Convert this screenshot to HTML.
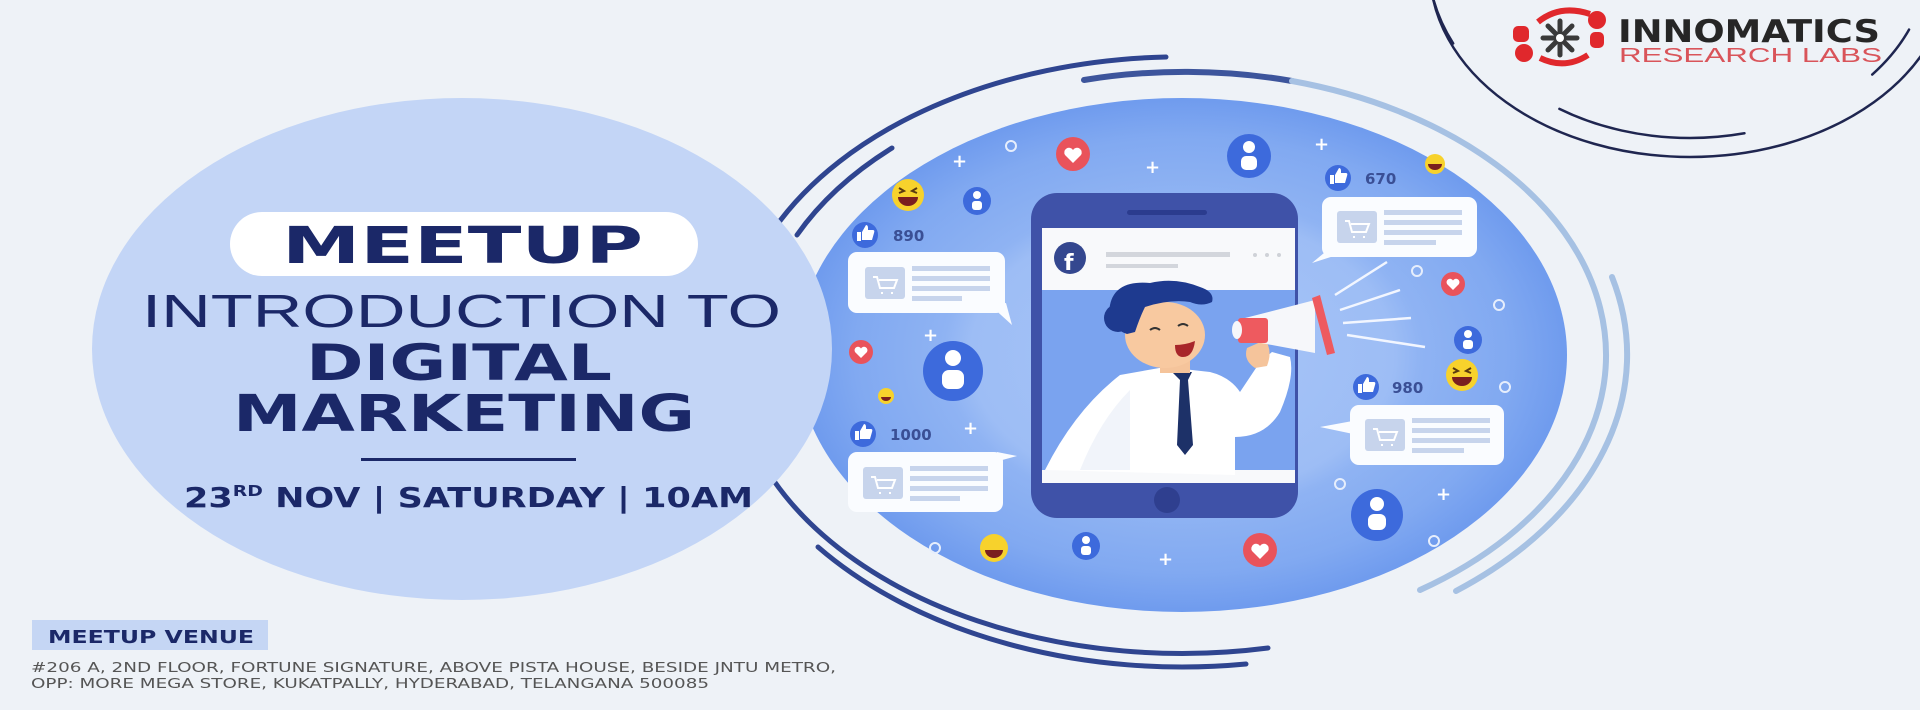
<!DOCTYPE html>
<html><head><meta charset="utf-8"><style>
html,body{margin:0;padding:0;background:#eef2f7;}
svg{display:block}
</style></head><body>
<svg width="1920" height="710" viewBox="0 0 1920 710" xmlns="http://www.w3.org/2000/svg">
<defs>
<radialGradient id="bg" cx="0.5" cy="0.5" r="0.5">
<stop offset="0" stop-color="#a9c6f7"/>
<stop offset="0.55" stop-color="#9dbdf5"/>
<stop offset="0.62" stop-color="#8fb3f3"/>
<stop offset="0.85" stop-color="#81a9f1"/>
<stop offset="1" stop-color="#6f9bee"/>
</radialGradient>
</defs>
<rect width="1920" height="710" fill="#eef2f7"/>

<!-- rings around the big circle -->
<g fill="none" stroke-linecap="round">
<path d="M774 229 A450 298 0 0 1 1166 57" stroke="#2f4590" stroke-width="5"/>
<path d="M797 235 A425 283 0 0 1 892 148" stroke="#2f4590" stroke-width="5"/>
<path d="M1084 80 A425 284 0 0 1 1292 81" stroke="#3d559c" stroke-width="6"/>
<path d="M1292 81 A425 284 0 0 1 1420 590" stroke="#a6c1e3" stroke-width="6"/>
<path d="M1612 277 A445 300 0 0 1 1456 591" stroke="#a6c1e3" stroke-width="6"/>
<path d="M1268 648 A450 298 0 0 1 774 481" stroke="#2f4590" stroke-width="5"/>
<path d="M1246 664 A462 312 0 0 1 818 547" stroke="#2f4590" stroke-width="5"/>
</g>

<!-- big blue circle -->
<ellipse cx="1182" cy="355" rx="385" ry="257" fill="url(#bg)"/>

<!-- left pale ellipse -->
<ellipse cx="462" cy="349" rx="370" ry="251" fill="#c3d5f6"/>

<!-- decorative small items -->
<g fill="none" stroke="#e6eefc" stroke-width="2">
<circle cx="1011" cy="146" r="5"/><circle cx="1417" cy="271" r="5"/><circle cx="1499" cy="305" r="5"/><circle cx="1505" cy="387" r="5"/><circle cx="935" cy="548" r="5"/><circle cx="1340" cy="484" r="5"/><circle cx="1434" cy="541" r="5"/>
</g>
<g fill="#ffffff" font-family="DejaVu Sans, sans-serif" font-size="18" font-weight="bold">
<text x="952" y="167">+</text><text x="1145" y="173">+</text><text x="1314" y="150">+</text><text x="923" y="341">+</text><text x="963" y="434">+</text><text x="1436" y="500">+</text><text x="1158" y="565">+</text>
</g>

<!-- hearts -->
<g>
<circle cx="1073" cy="154" r="17" fill="#e9535b"/><path d="M1073 163 l-8 -8 a4.5 4.5 0 0 1 8 -5 a4.5 4.5 0 0 1 8 5z" fill="#fff"/>
<circle cx="861" cy="352" r="12" fill="#e9535b"/><path d="M861 358 l-6 -6 a3.2 3.2 0 0 1 6 -3.5 a3.2 3.2 0 0 1 6 3.5z" fill="#fff"/>
<circle cx="1453" cy="284" r="12" fill="#e9535b"/><path d="M1453 290 l-6 -6 a3.2 3.2 0 0 1 6 -3.5 a3.2 3.2 0 0 1 6 3.5z" fill="#fff"/>
<circle cx="1260" cy="550" r="17" fill="#e9535b"/><path d="M1260 559 l-8 -8 a4.5 4.5 0 0 1 8 -5 a4.5 4.5 0 0 1 8 5z" fill="#fff"/>
</g>

<!-- users -->
<g>
<circle cx="1249" cy="156" r="22" fill="#3d6adc"/><circle cx="1249" cy="147" r="6" fill="#fff"/><rect x="1241" y="156" width="16" height="14" rx="5" fill="#fff"/>
<circle cx="977" cy="201" r="14" fill="#3d6adc"/><circle cx="977" cy="195" r="4" fill="#fff"/><rect x="972" y="201" width="10" height="9" rx="3" fill="#fff"/>
<circle cx="953" cy="371" r="30" fill="#3d6adc"/><circle cx="953" cy="358" r="8" fill="#fff"/><rect x="942" y="370" width="22" height="19" rx="7" fill="#fff"/>
<circle cx="1468" cy="340" r="14" fill="#3d6adc"/><circle cx="1468" cy="334" r="4" fill="#fff"/><rect x="1463" y="340" width="10" height="9" rx="3" fill="#fff"/>
<circle cx="1377" cy="515" r="26" fill="#3d6adc"/><circle cx="1377" cy="504" r="7" fill="#fff"/><rect x="1368" y="514" width="18" height="16" rx="6" fill="#fff"/>
<circle cx="1086" cy="546" r="14" fill="#3d6adc"/><circle cx="1086" cy="540" r="4" fill="#fff"/><rect x="1081" y="546" width="10" height="9" rx="3" fill="#fff"/>
</g>

<!-- emojis -->
<g>
<circle cx="908" cy="195" r="16" fill="#f7d22c"/><path d="M898 197 h20 a10 9 0 0 1 -20 0z" fill="#7a1f1f"/><path d="M899 188 l5 3 l-5 2 M917 188 l-5 3 l5 2" stroke="#5a3b10" stroke-width="2" fill="none"/>
<circle cx="886" cy="396" r="8" fill="#f7d22c"/><path d="M881 397 h10 a5 4 0 0 1 -10 0z" fill="#7a1f1f"/>
<circle cx="1462" cy="375" r="16" fill="#f7d22c"/><path d="M1452 377 h20 a10 9 0 0 1 -20 0z" fill="#7a1f1f"/><path d="M1453 368 l5 3 l-5 2 M1471 368 l-5 3 l5 2" stroke="#5a3b10" stroke-width="2" fill="none"/>
<circle cx="994" cy="548" r="14" fill="#f7d22c"/><path d="M985 550 h18 a9 8 0 0 1 -18 0z" fill="#7a1f1f"/>
<circle cx="1435" cy="164" r="10" fill="#f7d22c"/><path d="M1428 164 h14 a7 6 0 0 1 -14 0z" fill="#7a1f1f"/>
</g>

<!-- likes -->
<g font-family="DejaVu Sans, sans-serif" font-weight="bold" font-size="15" fill="#3a4f95">
<g fill="#3d6adc"><circle cx="865" cy="235" r="13"/><circle cx="1338" cy="178" r="13"/><circle cx="1366" cy="387" r="13"/><circle cx="863" cy="434" r="13"/></g>
<g fill="#fff">
<path d="M857 232 h4 v9 h-4z M862 232 l4 -7 q2 0 2 3 v2 h5 q2 0 1 3 l-2 7 h-10z"/>
<path d="M1330 175 h4 v9 h-4z M1335 175 l4 -7 q2 0 2 3 v2 h5 q2 0 1 3 l-2 7 h-10z"/>
<path d="M1358 384 h4 v9 h-4z M1363 384 l4 -7 q2 0 2 3 v2 h5 q2 0 1 3 l-2 7 h-10z"/>
<path d="M855 431 h4 v9 h-4z M860 431 l4 -7 q2 0 2 3 v2 h5 q2 0 1 3 l-2 7 h-10z"/>
</g>
<text x="893" y="241">890</text><text x="1365" y="184">670</text><text x="1392" y="393">980</text><text x="890" y="440">1000</text>
</g>

<!-- bubbles -->
<g>
<g fill="#fafcff">
<rect x="848" y="252" width="157" height="61" rx="9"/><path d="M990 305 l22 20 l-6 -22z"/>
<rect x="848" y="452" width="155" height="60" rx="9"/><path d="M995 462 l22 -6 l-20 -4z"/>
<rect x="1322" y="197" width="155" height="60" rx="9"/><path d="M1330 248 l-18 15 l25 -8z"/>
<rect x="1350" y="405" width="154" height="60" rx="9"/><path d="M1358 420 l-38 7 l38 8z"/>
</g>
<g fill="#c7d4ec">
<rect x="865" y="267" width="40" height="32" rx="3"/><rect x="912" y="266" width="78" height="5"/><rect x="912" y="276" width="78" height="5"/><rect x="912" y="286" width="78" height="5"/><rect x="912" y="296" width="50" height="5"/>
<rect x="863" y="467" width="40" height="32" rx="3"/><rect x="910" y="466" width="78" height="5"/><rect x="910" y="476" width="78" height="5"/><rect x="910" y="486" width="78" height="5"/><rect x="910" y="496" width="50" height="5"/>
<rect x="1337" y="211" width="40" height="32" rx="3"/><rect x="1384" y="210" width="78" height="5"/><rect x="1384" y="220" width="78" height="5"/><rect x="1384" y="230" width="78" height="5"/><rect x="1384" y="240" width="52" height="5"/>
<rect x="1365" y="419" width="40" height="32" rx="3"/><rect x="1412" y="418" width="78" height="5"/><rect x="1412" y="428" width="78" height="5"/><rect x="1412" y="438" width="78" height="5"/><rect x="1412" y="448" width="52" height="5"/>
</g>
<g fill="none" stroke="#fff" stroke-width="2">
<path d="M873 277 h4 l3 11 h14 l3 -8 h-18 M882 292 v2 M892 292 v2"/>
<path d="M871 477 h4 l3 11 h14 l3 -8 h-18 M880 492 v2 M890 492 v2"/>
<path d="M1345 221 h4 l3 11 h14 l3 -8 h-18 M1354 236 v2 M1364 236 v2"/>
<path d="M1373 429 h4 l3 11 h14 l3 -8 h-18 M1382 444 v2 M1392 444 v2"/>
</g>
</g>

<!-- megaphone sound lines -->
<g stroke="#f2f6ff" stroke-width="2.5">
<path d="M1335 295 l52 -33 M1340 310 l60 -20 M1343 323 l68 -5 M1347 335 l78 12"/>
</g>

<!-- phone -->
<rect x="1031" y="193" width="267" height="325" rx="26" fill="#3f52a8"/>
<rect x="1127" y="210" width="80" height="5" rx="2.5" fill="#2b3c8e"/>
<rect x="1042" y="228" width="253" height="255" fill="#7aa3ef"/>
<rect x="1042" y="228" width="253" height="62" fill="#f8f9fb"/>
<rect x="1042" y="470" width="253" height="13" fill="#f8f9fb"/>
<circle cx="1167" cy="500" r="13" fill="#2f3f8f"/>
<circle cx="1070" cy="258" r="16" fill="#34478f"/>
<text x="1064" y="270" font-family="DejaVu Sans, sans-serif" font-weight="bold" font-size="22" fill="#fff">f</text>
<rect x="1106" y="252" width="124" height="5" fill="#d3d6dc"/><rect x="1106" y="264" width="72" height="4" fill="#d3d6dc"/>
<g fill="#cfd2d8"><circle cx="1255" cy="255" r="2"/><circle cx="1267" cy="255" r="2"/><circle cx="1279" cy="255" r="2"/></g>

<!-- man -->
<g>
<path d="M1045 470 q30 -60 75 -95 l45 -8 l45 5 q20 5 30 20 l20 -30 l12 -10 l18 5 q5 20 -10 55 q-15 25 -45 25 v38 z" fill="#ffffff"/>
<path d="M1080 470 q20 -50 50 -80 l0 80z" fill="#e8edf6" opacity="0.6"/>
<path d="M1172 372 l20 0 l-4 8 l5 65 l-8 10 l-8 -10 l3 -65z" fill="#1d3168"/>
<rect x="1160" y="355" width="30" height="18" fill="#f5c49b"/>
<ellipse cx="1165" cy="335" rx="40" ry="33" fill="#f8c9a0"/>
<path d="M1175 345 q10 0 20 -4 q-2 16 -12 16 q-8 0 -8 -12z" fill="#a8262a"/>
<path d="M1110 305 q5 -25 40 -22 q25 -6 50 4 q15 5 12 15 q-10 5 -22 0 q-20 -3 -45 5 q-5 10 -10 25 l-8 2 q-22 -8 -17 -29z" fill="#1e3a8f"/>
<circle cx="1118" cy="318" r="14" fill="#1e3a8f"/>
<path d="M1150 330 q5 -4 10 0 M1178 326 q5 -4 10 0" stroke="#333" stroke-width="2" fill="none"/>
<path d="M1255 368 q-12 -8 -8 -20 l18 -8 q8 10 2 26z" fill="#f5c49b"/>
<path d="M1245 318 l70 -18 l0 53 l-70 -13z" fill="#f6f7fa"/>
<rect x="1238" y="318" width="30" height="25" rx="3" fill="#ee5a5f"/>
<path d="M1312 298 l8 -3 l15 58 l-8 2z" fill="#ee5a5f"/>
<ellipse cx="1237" cy="330" rx="5" ry="9" fill="#f6f7fa"/>
</g>

<!-- left text -->
<rect x="230" y="212" width="468" height="64" rx="32" fill="#ffffff"/>
<g fill="#1b2868" font-family="'DejaVu Sans', 'Liberation Sans', sans-serif">
<text x="282" y="263" font-size="51" font-weight="bold" textLength="361" lengthAdjust="spacingAndGlyphs">MEETUP</text>
<text x="142" y="327" font-size="46" font-family="'Liberation Sans', sans-serif" textLength="639" lengthAdjust="spacingAndGlyphs">INTRODUCTION TO</text>
<text x="306" y="380" font-size="50" font-weight="bold" textLength="306" lengthAdjust="spacingAndGlyphs">DIGITAL</text>
<text x="233" y="431" font-size="51" font-weight="bold" textLength="462" lengthAdjust="spacingAndGlyphs">MARKETING</text>
<rect x="361" y="458" width="215" height="3"/>
<text x="184" y="507" font-size="28" font-weight="bold" textLength="569" lengthAdjust="spacingAndGlyphs">23<tspan font-size="15" dy="-11">RD</tspan><tspan dy="11"> NOV | SATURDAY | 10AM</tspan></text>
</g>

<rect x="32" y="620" width="236" height="30" fill="#c5d6f4"/>
<g font-family="'DejaVu Sans', sans-serif">
<text x="48" y="643" font-size="18" font-weight="bold" fill="#1b2868" textLength="206" lengthAdjust="spacingAndGlyphs">MEETUP VENUE</text>
<text x="31" y="672" font-size="13.5" fill="#555" textLength="805" lengthAdjust="spacingAndGlyphs">#206 A, 2ND FLOOR, FORTUNE SIGNATURE, ABOVE PISTA HOUSE, BESIDE JNTU METRO,</text>
<text x="31" y="688" font-size="13.5" fill="#555" textLength="678" lengthAdjust="spacingAndGlyphs">OPP: MORE MEGA STORE, KUKATPALLY, HYDERABAD, TELANGANA 500085</text>
</g>

<!-- logo ring -->
<g fill="none" stroke="#1f2650" stroke-width="2.5" stroke-linecap="round">
<ellipse cx="1690" cy="-30" rx="260" ry="187" pathLength="360" stroke-dasharray="180 400" stroke-dashoffset="-0"/>
<ellipse cx="1690" cy="-40" rx="238" ry="178" pathLength="360" stroke-dasharray="52 400" stroke-dashoffset="-75"/>
<ellipse cx="1690" cy="-40" rx="238" ry="178" pathLength="360" stroke-dasharray="16 400" stroke-dashoffset="-20"/>
<ellipse cx="1690" cy="-40" rx="262" ry="195" pathLength="360" stroke-dasharray="12 400" stroke-dashoffset="-158"/>
</g>

<!-- logo icon -->
<g>
<path d="M1538 22 q22 -18 52 -8" stroke="#e0282c" stroke-width="6" fill="none"/>
<path d="M1540 58 q25 12 48 -3" stroke="#e0282c" stroke-width="6" fill="none"/>
<circle cx="1597" cy="20" r="9" fill="#e0282c"/>
<circle cx="1524" cy="53" r="9" fill="#e0282c"/>
<rect x="1513" y="26" width="16" height="16" rx="5" fill="#e0282c"/>
<rect x="1590" y="32" width="14" height="16" rx="5" fill="#e0282c"/>
<g stroke="#3a3a3a" stroke-width="5" stroke-linecap="round">
<path d="M1560 38 l0 -17 M1560 38 l12 -12 M1560 38 l17 0 M1560 38 l12 12 M1560 38 l0 17 M1560 38 l-12 12 M1560 38 l-17 0 M1560 38 l-12 -12"/>
</g>
<circle cx="1560" cy="38" r="4" fill="#fff"/>
</g>
<text x="1618" y="42" font-family="'DejaVu Sans', sans-serif" font-weight="bold" font-size="31" fill="#262626" textLength="262" lengthAdjust="spacingAndGlyphs">INNOMATICS</text>
<text x="1619" y="62" font-family="'Liberation Sans', sans-serif" font-size="20" fill="#d9545a" textLength="263" lengthAdjust="spacingAndGlyphs">RESEARCH LABS</text>
</svg>
</body></html>
